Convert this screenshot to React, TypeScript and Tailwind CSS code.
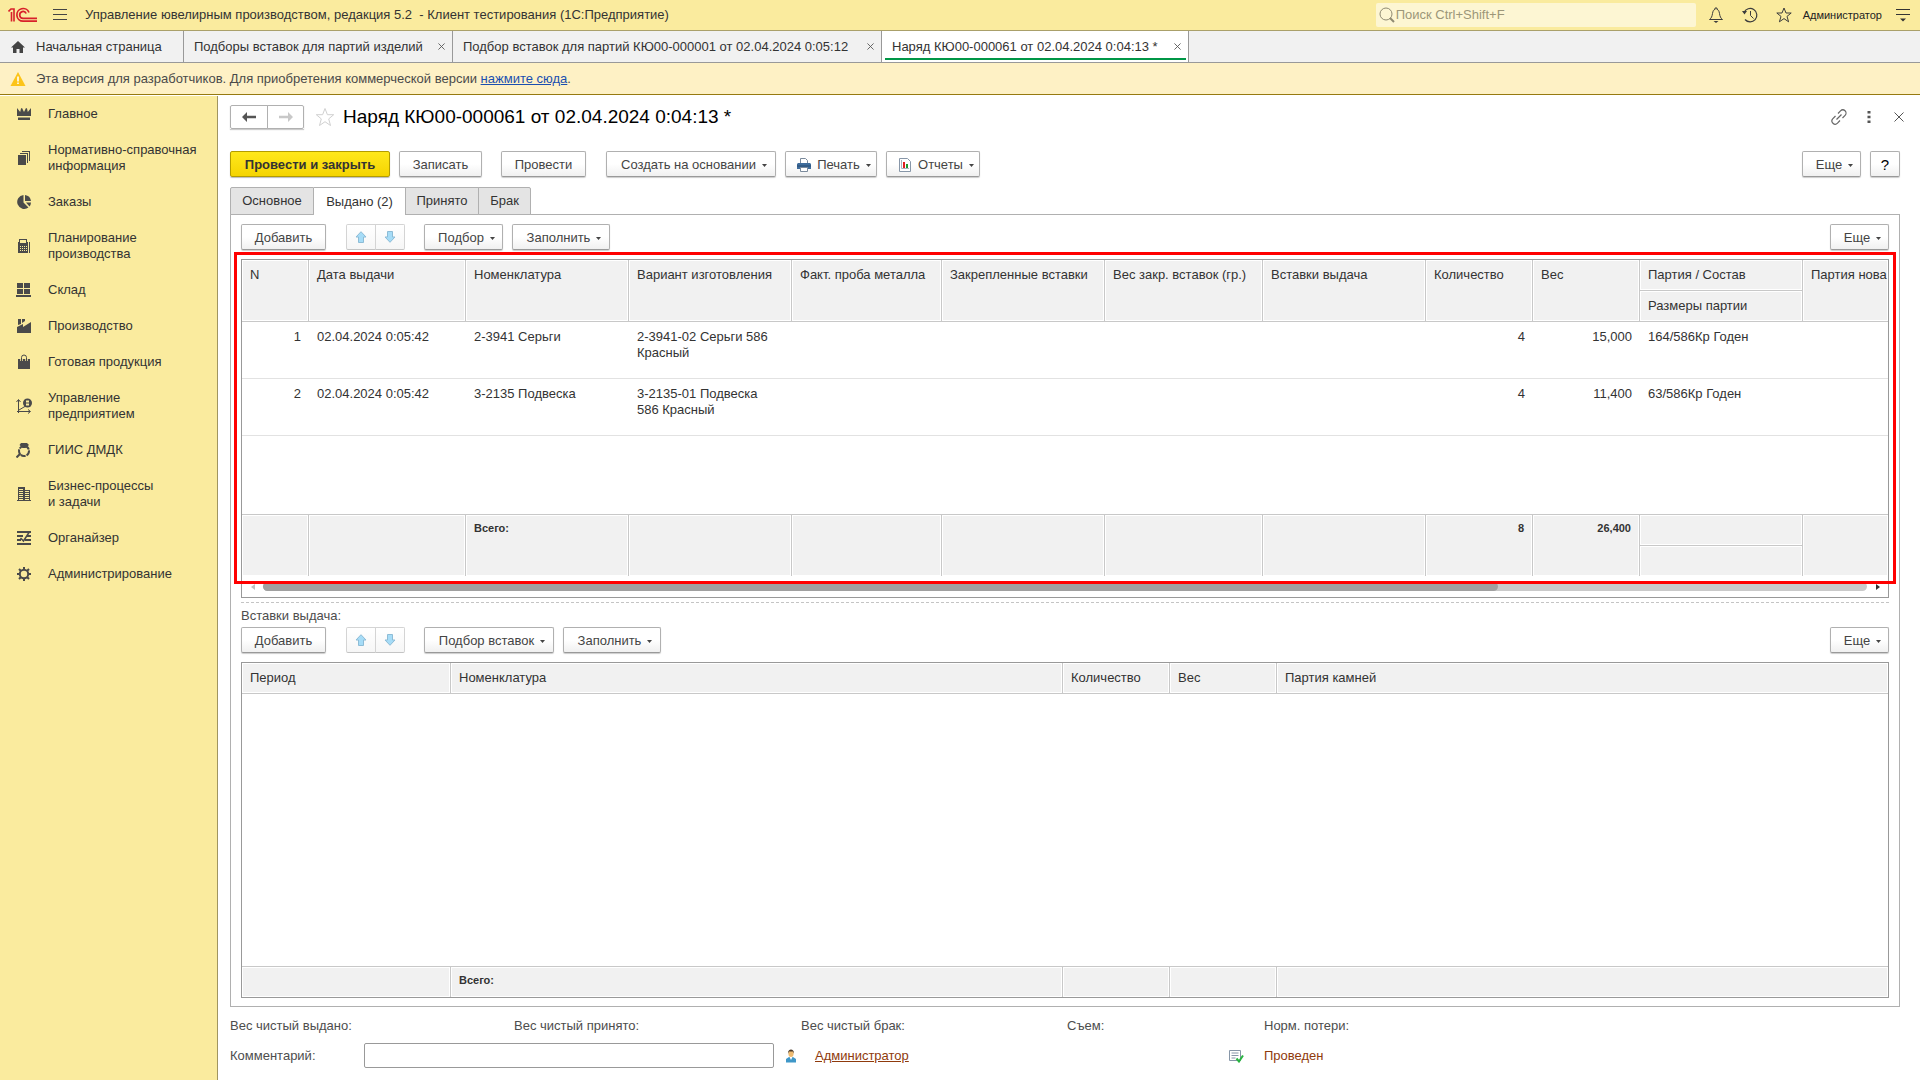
import React from "react";
import clsx from "clsx";

const menu = [
  { icon: "crown", label: "Главное", width: "w-32" },
  { icon: "docs", label: "Нормативно-справочная информация", width: "w-40" },
  { icon: "pie", label: "Заказы", width: "w-32" },
  { icon: "calc", label: "Планирование производства", width: "w-32" },
  { icon: "boxes", label: "Склад", width: "w-32" },
  { icon: "factory", label: "Производство", width: "w-32" },
  { icon: "bag", label: "Готовая продукция", width: "w-32" },
  { icon: "chart", label: "Управление предприятием", width: "w-32" },
  { icon: "ring", label: "ГИИС ДМДК", width: "w-32" },
  { icon: "building", label: "Бизнес-процессы и задачи", width: "w-28" },
  { icon: "organizer", label: "Органайзер", width: "w-32" },
  { icon: "gear", label: "Администрирование", width: "w-32" },
];

const windows = [
  { title: "Подборы вставок для партий изделий", width: "w-[269px]" },
  { title: "Подбор вставок для партий КЮ00-000001 от 02.04.2024 0:05:12", width: "w-[429px]" },
  { title: "Наряд КЮ00-000061 от 02.04.2024 0:04:13 *", width: "w-[307px]", active: true },
];

const columns = [
  { title: "N", width: "w-[67px]" },
  { title: "Дата выдачи", width: "w-[157px]" },
  { title: "Номенклатура", width: "w-[163px]", total: "Всего:" },
  { title: "Вариант изготовления", width: "w-[163px]" },
  { title: "Факт. проба металла", width: "w-[150px]" },
  { title: "Закрепленные вставки", width: "w-[163px]" },
  { title: "Вес закр. вставок (гр.)", width: "w-[158px]" },
  { title: "Вставки выдача", width: "w-[163px]" },
  { title: "Количество", width: "w-[107px]", total: "8", right: true },
  { title: "Вес", width: "w-[107px]", total: "26,400", right: true },
  { title: "Партия / Состав", width: "w-[163px]", sub: "Размеры партии" },
  { title: "Партия нова", width: "w-auto" },
];

const rows = [
  ["1", "02.04.2024 0:05:42", "2-3941 Серьги", "2-3941-02 Серьги 586 Красный", "", "", "", "", "4", "15,000", "164/586Кр Годен", ""],
  ["2", "02.04.2024 0:05:42", "3-2135 Подвеска", "3-2135-01 Подвеска 586 Красный", "", "", "", "", "4", "11,400", "63/586Кр Годен", ""],
];

const stoneColumns = [
  { title: "Период", width: "w-[209px]" },
  { title: "Номенклатура", width: "w-[612px]", total: "Всего:" },
  { title: "Количество", width: "w-[107px]" },
  { title: "Вес", width: "w-[107px]" },
  { title: "Партия камней", width: "w-auto" },
];

function MenuIcon({ name }: { name: string }) {
  return (
    <svg viewBox="0 0 16 16" className="size-4 shrink-0" fill="#4a4a4a" aria-hidden="true">
      {name === "crown" && <path d="M1 2l3.2 4L5 2.5 6 2l2 4 2-4 1 .5.8 3.5L15 2v8H1zM2 11.5h12V14H2z" />}
      {name === "docs" && (
        <path d="M2 5h8v10H2zM4 3h8v10h-1V4H4zM6 1h8v10h-1V2H6z" />
      )}
      {name === "pie" && <path d="M7.5 1v7.5l5 5A7 7 0 1 1 7.5 1zM9 1a7 7 0 0 1 6 6H9zM10 8.500h5a7 7 0 0 1-1.500 4z" />}
      {name === "calc" && (
        <path fillRule="evenodd" d="M3 1h8v3h1v11H2V4h1zM4 2v3h6V2zM4 8v1h1V8zm2 0v1h1V8zm2 0v1h1V8zm2 0v1h1V8zM4 10v1h1v-1zm2 0v1h1v-1zm2 0v1h1v-1zm2 0v1h1v-1zM4 12v1h1v-1zm2 0v1h1v-1zm2 0v1h1v-1zm2 0v1h1v-1zM13 4h1v11h-1z" />
      )}
      {name === "boxes" && <path d="M1 1h6v5H1zM8 1h6v5H8zM1 7h6v5H1zM8 7h6v5H8zM0 13h15v2H0z" />}
      {name === "factory" && <path d="M2 1h3v5L2 7zM6 1h3v2L6 5zM1 9l6-3v3l8-5v11H1z" />}
      {name === "bag" && (
        <>
          <path d="M2 5h12v10H2z" />
          <path d="M5.500 7V4a2.500 2.500 0 0 1 5 0v3" fill="none" stroke="#faeb9e" strokeWidth="2.500" />
          <path d="M5.500 7V3.500a2.500 2.500 0 0 1 5 0V7" fill="none" stroke="#4a4a4a" />
        </>
      )}
      {name === "chart" && (
        <>
          <path d="M2.500 15V2M.5 4l2-2.500 2 2.500M1 13.500h13M12 11.500l2.500 2-2.500 2M3 12l5-3 2-1" fill="none" stroke="#4a4a4a" />
          <circle cx="11.500" cy="5" r="4.500" />
          <path d="M10 2.500h3v2h-3zM10 5.500h3v2h-3z" fill="#faeb9e" />
        </>
      )}
      {name === "ring" && (
        <>
          <path d="M5 1h6l2 2-3.500 3h-3L3.500 3z" />
          <circle cx="8" cy="9" r="5" fill="none" stroke="#4a4a4a" strokeWidth="2" strokeDasharray="5 1" />
          <path d="M.5 15.500l4-4" stroke="#4a4a4a" strokeWidth="2" />
        </>
      )}
      {name === "building" && (
        <path fillRule="evenodd" d="M2 1h7v3h5v10h1v1H1v-1h1zM3 3v1h4V3zm0 2v1h4V5zm0 2v1h4V7zm0 2v1h4V9zm0 2v1h4v-1zm0 2v1h4v-1zM9 5v1h4V5zm0 2v1h4V7zm0 2v1h4V9zm0 2v1h4v-1zm0 2v1h4v-1z" />
      )}
      {name === "organizer" && (
        <>
          <path d="M1 2h14M1 6h6M11 6h4M1 10h4M9 10h6M1 14h14" fill="none" stroke="#4a4a4a" strokeWidth="2" />
          <path d="M4.500 8l3 3L13 2.500" fill="none" stroke="#4a4a4a" strokeWidth="1.500" />
        </>
      )}
      {name === "gear" && (
        <>
          <circle cx="8" cy="8" r="4.200" fill="none" stroke="#4a4a4a" strokeWidth="2" />
          <path d="M8 1v3M8 12v3M1 8h3M12 8h3M3 3l2 2M11 11l2 2M13 3l-2 2M5 11l-2 2" stroke="#4a4a4a" strokeWidth="2" />
        </>
      )}
    </svg>
  );
}

function Logo() {
  return (
    <svg viewBox="0 0 30 16" className="h-4 w-[30px]" fill="none" stroke="#d8202a" aria-label="1С">
      <path d="M.5 4.500L3 2h3v12.500M3.500 14.500V5" strokeWidth="1.600" />
      <path d="M21 5.500A6.300 6.300 0 1 0 15 14.200h14" strokeWidth="1.700" />
      <path d="M18.200 6.500A3.400 3.400 0 1 0 15 11.300h14" strokeWidth="1.700" />
    </svg>
  );
}

function Caret() {
  return (
    <svg viewBox="0 0 5 3" className="mt-0.5 h-[3px] w-[5px]" fill="#444" aria-hidden="true">
      <path d="M0 0h5L2.500 3z" />
    </svg>
  );
}

type ButtonProps = { className?: string; caret?: boolean; children: React.ReactNode; label?: string };

function Button({ className, caret, children, label }: ButtonProps) {
  return (
    <button
      type="button"
      aria-label={label}
      className={clsx(
        "flex h-[26px] items-center justify-center rounded-xs border border-[#b0b0b0] border-b-[#999] bg-linear-to-b from-white from-50% to-[#f0f0f0] pt-px whitespace-nowrap text-[#444] shadow-[0_1px_1px_#ccc]",
        caret && "gap-1.5 pl-1.5",
        className,
      )}
    >
      {children}
      {caret && <Caret />}
    </button>
  );
}

function MoveButtons() {
  const style = "flex h-[26px] w-[30px] items-center justify-center border border-[#d4d4d4] border-b-[#c4c4c4] bg-linear-to-b from-white to-[#f6f6f6]";
  return (
    <div className="mr-[19px] ml-5 flex">
      <button type="button" aria-label="Переместить вверх" className={clsx(style, "rounded-l-xs")}>
        <svg viewBox="0 0 12 12" className="size-3" fill="#a6dcf7" stroke="#8dbcd6">
          <path d="M6 .7L11 6H8.500v5.500h-5V6H1z" />
        </svg>
      </button>
      <button type="button" aria-label="Переместить вниз" className={clsx(style, "-ml-px rounded-r-xs")}>
        <svg viewBox="0 0 12 12" className="size-3" fill="#a6dcf7" stroke="#8dbcd6">
          <path d="M6 11.300L1 6h2.500V.5h5V6H11z" />
        </svg>
      </button>
    </div>
  );
}

const headCell = "overflow-hidden border-r border-b border-[#c8c8c8] bg-[#f1f1f1] pt-[7px] pl-2 text-left align-top font-normal whitespace-nowrap shadow-[inset_0_0_0_1px_#fff] last:border-r-0";
const footCell = "overflow-hidden border-t border-r border-[#c8c8c8] bg-[#f1f1f1] px-2 pt-[5px] text-left align-top text-[11px] font-bold whitespace-nowrap shadow-[inset_0_0_0_1px_#fff] last:border-r-0";

function IssuedTable() {
  return (
    <table className="w-full table-fixed border-separate border-spacing-0 leading-4">
      <colgroup>
        {columns.map((c) => (
          <col key={c.title} className={c.width} />
        ))}
      </colgroup>
      <thead>
        <tr className="h-[31px]">
          {columns.map((c) => (
            <th key={c.title} rowSpan={c.sub ? 1 : 2} className={headCell}>
              {c.title}
            </th>
          ))}
        </tr>
        <tr className="h-[31px]">
          <th className="border-r border-b border-[#c8c8c8] bg-[#f1f1f1] px-2 pt-[7px] text-left align-top font-normal whitespace-nowrap shadow-[inset_0_0_0_1px_#fff]">
            Размеры партии
          </th>
        </tr>
      </thead>
      <tbody>
        {rows.map((row) => (
          <tr key={row[0]} className="h-[57px]">
            {row.map((value, i) => (
              <td
                key={columns[i].title}
                className={clsx(
                  "border-b border-[#e2e2e2] pt-[7px] pl-2 align-top",
                  i === 0 || columns[i].right ? "pr-2 text-right" : "pr-4",
                )}
              >
                {value}
              </td>
            ))}
          </tr>
        ))}
        <tr className="h-[78px]">
          <td colSpan={12} />
        </tr>
      </tbody>
      <tfoot>
        <tr className="h-8">
          {columns.map((c) => (
            <td key={c.title} rowSpan={c.sub ? 1 : 2} className={clsx(footCell, c.right && "text-right", c.sub && "border-b")}>
              {c.total}
            </td>
          ))}
        </tr>
        <tr className="h-[30px]">
          <td className="border-r border-[#c8c8c8] bg-[#f1f1f1] shadow-[inset_0_0_0_1px_#fff]" />
        </tr>
      </tfoot>
    </table>
  );
}

function StonesTable() {
  return (
    <table className="h-full w-full table-fixed border-separate border-spacing-0 leading-4">
      <colgroup>
        {stoneColumns.map((c) => (
          <col key={c.title} className={c.width} />
        ))}
      </colgroup>
      <thead>
        <tr className="h-[31px]">
          {stoneColumns.map((c) => (
            <th key={c.title} className={headCell}>
              {c.title}
            </th>
          ))}
        </tr>
      </thead>
      <tbody>
        <tr>
          <td colSpan={5} />
        </tr>
      </tbody>
      <tfoot>
        <tr className="h-[31px]">
          {stoneColumns.map((c) => (
            <td key={c.title} className={footCell}>
              {c.total}
            </td>
          ))}
        </tr>
      </tfoot>
    </table>
  );
}

function Header() {
  return (
    <header className="flex h-[31px] shrink-0 items-center border-b border-[#aaa06a] bg-[#faeb9e] pl-2">
      <Logo />
      <button type="button" aria-label="Меню" className="ml-[15px]">
        <svg viewBox="0 0 14 12" className="h-3 w-3.5" stroke="#444">
          <path d="M0 .5h14M0 5.500h14M0 10.500h14" />
        </svg>
      </button>
      <div className="ml-[18px] whitespace-pre">Управление ювелирным производством, редакция 5.2  - Клиент тестирования (1С:Предприятие)</div>
      <div className="ml-auto flex h-6 w-80 items-center rounded-xs bg-[#fdf6d3] pl-[3px]">
        <svg viewBox="0 0 16 16" className="size-4 shrink-0" fill="none" stroke="#8f8a72">
          <circle cx="7" cy="7" r="6" />
          <path d="M11 11l4 4" strokeWidth="2" />
        </svg>
        <input
          type="search"
          aria-label="Поиск"
          placeholder="Поиск Ctrl+Shift+F"
          className="min-w-0 flex-1 bg-transparent pl-px outline-none placeholder:text-[#9c9679]"
        />
      </div>
      <button type="button" aria-label="Оповещения" className="ml-3">
        <svg viewBox="0 0 16 16" className="size-4" fill="none" stroke="#3c3c3c">
          <path d="M1.500 12.500h13c-2-1.500-2.500-3-3-6C11 4 10.500 2.500 9 2.500V1H7v1.500C5.500 2.500 5 4 4.500 6.500c-.5 3-1 4.500-3 6z" />
          <path d="M5.500 14h5L8 16z" fill="#3c3c3c" stroke="none" />
        </svg>
      </button>
      <button type="button" aria-label="История" className="ml-[18px]">
        <svg viewBox="0 0 16 16" className="size-4" fill="none" stroke="#3c3c3c">
          <path d="M2 5.500A6.700 6.700 0 1 1 3 12.500" strokeWidth="1.200" />
          <path d="M8.500 4v4.500l3 3" />
          <path d="M0 4h5L2.500 7.500z" fill="#3c3c3c" stroke="none" />
        </svg>
      </button>
      <button type="button" aria-label="Избранное" className="ml-[18px]">
        <svg viewBox="0 0 16 16" className="size-4" fill="none" stroke="#3c3c3c">
          <path d="M8 1l2 5h5.200l-4.200 3.400 1.600 5.400L8 11.600l-4.600 3.200L5 9.400.8 6H6z" />
        </svg>
      </button>
      <span className="ml-[11px] text-[11px] text-[#222]">Администратор</span>
      <button type="button" aria-label="Настройки" className="mr-2.5 ml-3.5">
        <svg viewBox="0 0 14 14" className="size-3.5" stroke="#333">
          <path d="M0 1.500h14M0 6.500h14" />
          <path d="M4 10.500h6L7 13.500z" fill="#333" stroke="none" />
        </svg>
      </button>
    </header>
  );
}

function WindowTabs() {
  return (
    <nav className="flex h-8 shrink-0 border-b border-[#999] bg-[#f1f1f1]">
      <button type="button" className="flex w-[184px] items-center border-r border-[#999] pl-2.5 whitespace-nowrap">
        <svg viewBox="0 0 16 14" className="mr-2.5 h-3.5 w-4" fill="#444">
          <path d="M8 1l7 6.500h-2V13H9.500V9h-3v4H3V7.500H1z" />
        </svg>
        Начальная страница
      </button>
      {windows.map((w) => (
        <div key={w.title} className={clsx("relative flex items-center justify-between border-r border-[#999] pr-[7px] pl-2.5", w.width, w.active && "bg-white")}>
          <button type="button" className="whitespace-nowrap">{w.title}</button>
          <button type="button" aria-label="Закрыть">
            <svg viewBox="0 0 8 8" className="size-[7px]" stroke="#555">
              <path d="M.5.5l7 7M7.500.5l-7 7" />
            </svg>
          </button>
          {w.active && <div className="absolute right-0.5 bottom-0.5 left-[3px] h-0.5 bg-[#009646]" />}
        </div>
      ))}
    </nav>
  );
}

function Sidebar() {
  return (
    <aside className="mt-px w-[218px] shrink-0 border-r border-[#a09560] bg-[#faeb9e]">
      {menu.map((item) => (
        <a key={item.icon} href="#" className="flex items-center px-4 py-2.5 leading-4">
          <MenuIcon name={item.icon} />
          <span className={clsx("ml-4", item.width)}>{item.label}</span>
        </a>
      ))}
    </aside>
  );
}

export default function App() {
  return (
    <div className="flex h-screen min-h-[960px] flex-col overflow-hidden bg-white font-['Liberation_Sans',Arial,sans-serif] text-[13px] leading-4 text-[#333]">
      <Header />
      <WindowTabs />
      <div className="flex h-8 shrink-0 items-center border-b border-[#967a10] bg-[#fef1c5] pl-2.5 text-[#4a4a4a]">
        <svg viewBox="0 0 16 14" className="mr-2.5 h-3.5 w-4">
          <path d="M8 0l7.500 14H.5z" fill="#fcc419" />
          <path d="M7.200 4.500h1.600V9.500H7.200zM7.200 10.500h1.600V12H7.200z" fill="#fff" />
        </svg>
        <span>
          Эта версия для разработчиков. Для приобретения коммерческой версии{" "}
          <a href="#" className="text-[#1a4fb0] underline">нажмите сюда</a>.
        </span>
      </div>

      <div className="flex min-h-0 flex-1">
        <Sidebar />
        <main className="flex min-w-0 flex-1 flex-col pr-5 pb-3 pl-3">
          <div className="mt-2.5 flex h-6 shrink-0 items-center">
            <div className="flex h-6 shadow-[0_1px_1px_#ccc]">
              <button type="button" aria-label="Назад" className="flex w-[38px] items-center justify-center rounded-l-xs border border-[#b0b0b0]">
                <svg viewBox="0 0 14 10" className="h-2.5 w-3.5" fill="#555">
                  <path d="M0 5l5-5v3.800h9v2.400H5V10z" />
                </svg>
              </button>
              <button type="button" aria-label="Вперед" className="-ml-px flex w-[37px] items-center justify-center rounded-r-xs border border-[#b0b0b0]">
                <svg viewBox="0 0 14 10" className="h-2.5 w-3.5" fill="#c8c8c8">
                  <path d="M14 5L9 0v3.800H0v2.400h9V10z" />
                </svg>
              </button>
            </div>
            <button type="button" aria-label="В избранное" className="ml-[11px]">
              <svg viewBox="0 0 20 20" className="size-5" fill="none" stroke="#d0d0d0">
                <path d="M10 1.500l2.400 6.200h6.300l-5 4.200 1.800 6.600L10 14.700l-5.500 3.800 1.800-6.600-5-4.200h6.300z" />
              </svg>
            </button>
            <h1 className="ml-2 text-[19px] leading-6 whitespace-nowrap text-black">Наряд КЮ00-000061 от 02.04.2024 0:04:13 *</h1>
            <div className="-mr-1 ml-auto flex items-center">
              <button type="button" aria-label="Ссылка">
                <svg viewBox="0 0 16 16" className="size-4" fill="none" stroke="#666" strokeWidth="1.200">
                  <path d="M5.500 10.500l5-5M7 4.500l2.500-2.700a3 3 0 0 1 4.600 4.500L11.500 9M9 11.500l-2.500 2.700a3 3 0 0 1-4.600-4.500L4.500 7" />
                </svg>
              </button>
              <button type="button" aria-label="Дополнительно" className="ml-5">
                <svg viewBox="0 0 4 12" className="h-3 w-1" fill="#555">
                  <path d="M.5 0h3v2.500h-3zM.5 4.700h3v2.500h-3zM.5 9.500h3V12h-3z" />
                </svg>
              </button>
              <button type="button" aria-label="Закрыть" className="ml-[23px]">
                <svg viewBox="0 0 10 10" className="size-2.5" stroke="#555">
                  <path d="M.5.5l9 9M9.500.5l-9 9" />
                </svg>
              </button>
            </div>
          </div>

          <div className="mt-[22px] flex shrink-0">
            <button
              type="button"
              className="h-[26px] w-40 rounded-xs border border-[#b39c00] bg-linear-to-b from-[#ffe81a] to-[#f5d400] pt-px font-bold whitespace-nowrap shadow-[0_1px_1px_#bbb]"
            >
              Провести и закрыть
            </button>
            <Button className="ml-[9px] w-[83px]">Записать</Button>
            <Button className="ml-[19px] w-[85px]">Провести</Button>
            <Button caret className="ml-5 w-[170px]">Создать на основании</Button>
            <Button caret className="ml-[9px] w-[92px]">
              <svg viewBox="0 0 14 14" className="size-3.5">
                <path d="M3.500 5V.5h5l2 2V5" fill="#fff" stroke="#7b8a9c" />
                <path d="M0 6l1-1h12l1 1v5H0z" fill="#3f6c9b" />
                <path d="M0 7.500h14v1H0z" fill="#264a70" />
                <path d="M3.500 9.500h7v4h-7z" fill="#fff" stroke="#7b8a9c" />
              </svg>
              Печать
            </Button>
            <Button caret className="ml-[9px] w-[94px]">
              <svg viewBox="0 0 14 14" className="size-3.5">
                <path d="M1.500.5h8l3 3v10h-11z" fill="#fff" stroke="#8796a8" />
                <path d="M3.500 2v8.500h7.500" fill="none" stroke="#aab4c0" />
                <path d="M5 4h2v6H5z" fill="#e02020" />
                <path d="M8 6h2v4H8z" fill="#209a30" />
              </svg>
              Отчеты
            </Button>
            <Button caret className="mr-[9px] ml-auto w-[59px]">Еще</Button>
            <Button className="w-[30px] text-[15px] text-black" label="Справка">?</Button>
          </div>

          <div role="tablist" className="relative mt-2.5 -mb-px flex h-7 shrink-0">
            <button role="tab" type="button" className="w-[84px] rounded-tl-xs border border-[#b0b0b0] bg-[#e4e4e4]">Основное</button>
            <button role="tab" type="button" aria-selected="true" className="w-[91px] border-t border-[#b0b0b0] bg-white">Выдано (2)</button>
            <button role="tab" type="button" className="w-[74px] border border-[#b0b0b0] bg-[#e4e4e4]">Принято</button>
            <button role="tab" type="button" className="-ml-px w-[53px] rounded-tr-xs border border-[#b0b0b0] bg-[#e4e4e4]">Брак</button>
          </div>

          <section className="flex min-h-0 flex-1 flex-col border border-[#b0b0b0] px-2.5 pt-[9px] pb-2">
            <div className="flex shrink-0">
              <Button className="w-[85px]">Добавить</Button>
              <MoveButtons />
              <Button caret className="w-[79px]">Подбор</Button>
              <Button caret className="ml-[9px] w-[98px]">Заполнить</Button>
              <Button caret className="ml-auto w-[59px]">Еще</Button>
            </div>

            <div className="relative mt-[9px] shrink-0 border border-[#999]">
              <div className="overflow-hidden">
                <IssuedTable />
              </div>
              <div className="flex h-[21px] items-center pr-2 pl-[9px]">
                <svg viewBox="0 0 4 6" className="h-1.5 w-1" fill="#c0c0c0">
                  <path d="M4 0v6L0 3z" />
                </svg>
                <div className="mr-[9px] ml-2 h-[9px] flex-1 rounded-full bg-[#cacaca]">
                  <div className="h-[9px] w-[77%] rounded-full bg-[#a0a0a0]" />
                </div>
                <svg viewBox="0 0 4 6" className="h-1.5 w-1" fill="#333">
                  <path d="M0 0v6l4-3z" />
                </svg>
              </div>
              <div className="pointer-events-none absolute -top-2 -right-2 bottom-[13px] -left-2 border-3 border-[#ff0000]" />
            </div>

            <div className="mt-1 shrink-0 border-t border-dashed border-[#c4c4c4]" />
            <h2 className="mt-[5px] shrink-0 text-[#4d4d4d]">Вставки выдача:</h2>

            <div className="mt-[3px] flex shrink-0">
              <Button className="w-[85px]">Добавить</Button>
              <MoveButtons />
              <Button caret className="w-[130px]">Подбор вставок</Button>
              <Button caret className="ml-[9px] w-[98px]">Заполнить</Button>
              <Button caret className="ml-auto w-[59px]">Еще</Button>
            </div>

            <div className="mt-[9px] min-h-0 flex-1 border border-[#999]">
              <StonesTable />
            </div>
          </section>

          <div className="mt-[11px] grid shrink-0 grid-cols-[284px_287px_266px_197px_1fr] text-[#4d4d4d]">
            <span>Вес чистый выдано:</span>
            <span>Вес чистый принято:</span>
            <span>Вес чистый брак:</span>
            <span>Съем:</span>
            <span>Норм. потери:</span>
          </div>

          <div className="mt-[9px] flex shrink-0 items-center text-[#4d4d4d]">
            <label htmlFor="comment" className="w-[134px]">Комментарий:</label>
            <input id="comment" type="text" className="h-[25px] w-[410px] rounded-xs border border-[#999] px-2 outline-none" />
            <svg viewBox="0 0 10 14" className="ml-3 h-3.5 w-2.5">
              <path d="M0 13.500V10l3-2h4l3 2v3.500z" fill="#3f97c8" />
              <path d="M3.500 8h3L5 11z" fill="#fff" />
              <ellipse cx="5" cy="4.500" rx="2.600" ry="3.500" fill="#eebb72" />
              <path d="M2 4.500C1.500-1 8.500-1 8 4.500L7 2.500H3z" fill="#4a3a2a" />
            </svg>
            <div className="ml-[19px] w-[413px]">
              <a href="#" className="text-[#8f3a0c] underline">Администратор</a>
            </div>
            <svg viewBox="0 0 16 14" className="h-3.5 w-4" fill="none">
              <path d="M1.500 1.500h11v10h-11z" fill="#fff" stroke="#8796a8" />
              <path d="M3.500 4h7M3.500 6.500h7M3.500 9h4" stroke="#8796a8" />
              <path d="M8.500 9.500l2.500 3L15 6.500" stroke="#28b440" strokeWidth="2" />
            </svg>
            <span className="ml-5 text-[#8f3a0c]">Проведен</span>
          </div>
        </main>
      </div>
    </div>
  );
}
